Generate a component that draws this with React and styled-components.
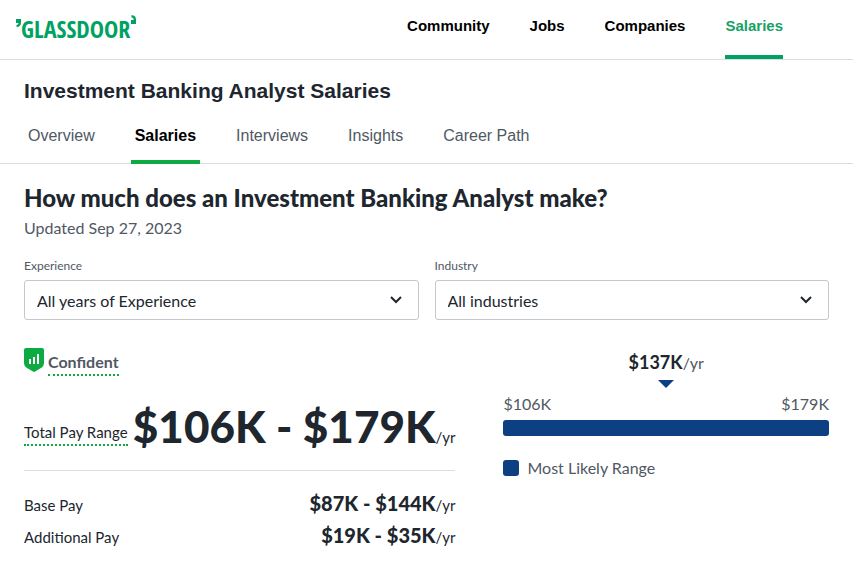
import React, { useState } from 'react';
import styled, { createGlobalStyle } from 'styled-components';

const GlobalStyle = createGlobalStyle`
  * {
    box-sizing: border-box;
  }
  body {
    margin: 0;
    background: #fff;
    color: #20262e;
    font-family: Lato, 'Liberation Sans', sans-serif;
    font-size: 16px;
  }
  h1, h2, p, ul, dl, dd {
    margin: 0;
    padding: 0;
  }
  ul {
    list-style: none;
  }
  a {
    color: inherit;
    text-decoration: none;
  }
`;

const Header = styled.header`
  display: flex;
  justify-content: space-between;
  height: 60px;
  padding: 0 70px 0 16px;
  border-bottom: 1px solid #dcdddf;
  font-family: 'Liberation Sans', Arial, sans-serif;
`;

const Logo = styled.a`
  display: flex;
  align-items: flex-start;
  padding-top: 14px;
  color: #00a264;
  span {
    padding-top: 4px;
    font-family: 'Noto Sans ExtraCondensed', 'Open Sans Condensed', 'Roboto Condensed', 'Liberation Sans Narrow', sans-serif;
    font-size: 24px;
    font-weight: 700;
    line-height: 22px;
  }
`;

const MainNav = styled.nav`
  ul {
    display: flex;
    gap: 40px;
    height: 100%;
  }
  li {
    display: flex;
  }
`;

const NavLink = styled.a`
  padding-top: 16px;
  border-bottom: 4px solid ${({ $active }) => ($active ? '#00a264' : 'transparent')};
  color: ${({ $active }) => ($active ? '#17a167' : '#000')};
  font-size: 15px;
  font-weight: 700;
  line-height: 20px;
`;

const SubHeader = styled.section`
  padding: 18px 24px 0;
  border-bottom: 1px solid #dcdddf;
  font-family: 'Liberation Sans', Arial, sans-serif;
  h1 {
    font-size: 21px;
    line-height: 26px;
  }
`;

const Tabs = styled.ul`
  display: flex;
  gap: 32px;
  margin: 20px 0 -1px;
`;

const Tab = styled.a`
  display: block;
  padding: 0 4px 12px;
  border-bottom: 4px solid ${({ $active }) => ($active ? '#0caa41' : 'transparent')};
  color: ${({ $active }) => ($active ? '#000' : '#505863')};
  font-weight: ${({ $active }) => ($active ? 700 : 400)};
  line-height: 24px;
`;

const Main = styled.main`
  padding: 18px 24px;
  h2 {
    font-size: 24px;
    font-weight: 900;
    line-height: 32px;
  }
`;

const Updated = styled.p`
  padding-top: 2px;
  color: #505863;
  line-height: 24px;
`;

const Filters = styled.form`
  display: grid;
  grid-template-columns: 1fr 1fr;
  gap: 16px;
  padding-top: 18px;
`;

const Field = styled.div`
  label {
    display: block;
    padding-bottom: 6px;
    color: #505863;
    font-size: 12px;
    line-height: 16px;
  }
`;

const SelectBox = styled.div`
  display: grid;
  align-items: center;
  > * {
    grid-area: 1 / 1;
  }
  svg {
    justify-self: end;
    margin-right: 17px;
    pointer-events: none;
  }
`;

const Select = styled.select`
  appearance: none;
  width: 100%;
  height: 40px;
  padding: 0 40px 0 12px;
  border: 1px solid #c4c7cc;
  border-radius: 3px;
  background: #fff;
  color: #20262e;
  font-family: inherit;
  font-size: 16px;
`;

const Summary = styled.div`
  display: grid;
  grid-template-columns: 57fr 43fr;
  gap: 48px;
  padding-top: 28px;
`;

const Confidence = styled.div`
  display: flex;
  gap: 4px;
`;

const Hint = styled.button`
  padding: 0;
  border: 0;
  border-bottom: 2px dotted #0caa41;
  background: none;
  color: ${({ $strong }) => ($strong ? '#505863' : '#20262e')};
  font-family: inherit;
  font-size: ${({ $strong }) => ($strong ? '16px' : '15px')};
  font-weight: ${({ $strong }) => ($strong ? 700 : 400)};
  line-height: 24px;
`;

const ConfidentHint = styled(Hint)`
  margin-top: 2px;
`;

const TotalRow = styled.div`
  display: flex;
  align-items: flex-end;
  justify-content: space-between;
  padding: 30px 0 24px;
  border-bottom: 1px solid #dcdddf;
  white-space: nowrap;
`;

const TotalPay = styled.div`
  font-size: 15px;
  line-height: 1;
  strong {
    font-size: 44px;
    font-weight: 900;
    line-height: 40px;
  }
`;

const Breakdown = styled.dl`
  padding-top: 18px;
  font-size: 15px;
  div {
    display: flex;
    align-items: baseline;
    justify-content: space-between;
    line-height: 32px;
  }
  strong {
    font-size: 20px;
    font-weight: 900;
    line-height: 1;
  }
`;

const Range = styled.div`
  color: #505863;
`;

const Median = styled.div`
  display: flex;
  flex-direction: column;
  align-items: center;
  gap: 4px;
  padding-top: 2px;
  line-height: 26px;
  strong {
    color: #20262e;
    font-size: 18px;
    font-weight: 700;
    line-height: 1;
  }
`;

const Ends = styled.div`
  display: flex;
  justify-content: space-between;
  padding: 5px 0;
  line-height: 22px;
`;

const Bar = styled.div`
  height: 16px;
  border-radius: 3px;
  background: #0d3f83;
`;

const Legend = styled.div`
  display: flex;
  align-items: center;
  gap: 8px;
  padding-top: 20px;
  line-height: 24px;
`;

const Swatch = styled.span`
  width: 16px;
  height: 16px;
  border-radius: 3px;
  background: #0d3f83;
`;

const mainLinks = ['Community', 'Jobs', 'Companies', 'Salaries'];
const tabs = ['Overview', 'Salaries', 'Interviews', 'Insights', 'Career Path'];
const breakdown = [
  { label: 'Base Pay', range: '$87K - $144K' },
  { label: 'Additional Pay', range: '$19K - $35K' },
];

const GlassdoorLogo = () => (
  <Logo href='#' aria-label='Glassdoor'>
    <svg width='5' height='14' viewBox='0 0 5 14' fill='currentColor'>
      <path d='M0 5h5v4c0 2.400-1.500 3.800-4.500 4V11c1.300-.1 2-.7 2-1.900H0z' />
    </svg>
    <span>GLASSDOOR</span>
    <svg width='6' height='12' viewBox='0 0 6 12' fill='currentColor'>
      <path d='M6 10H1V6h2.700C3.700 4.300 3 3.500 1.500 3.500V1C4.500 1.200 6 2.800 6 5.500z' />
    </svg>
  </Logo>
);

const Chevron = () => (
  <svg width='12' height='8' viewBox='0 0 12 8' fill='none' stroke='#20262e' strokeWidth='2'>
    <path d='M1 1l5 5 5-5' />
  </svg>
);

const Shield = () => (
  <svg width='20' height='24' viewBox='0 0 20 24'>
    <path
      d='M2 0h16a2 2 0 0 1 2 2v12.500c0 2.500-1 4.300-3 5.500l-6 3.600a2 2 0 0 1-2 0L3 20c-2-1.200-3-3-3-5.500V2a2 2 0 0 1 2-2z'
      fill='#0caa41'
    />
    <path d='M5 11h2v5H5zM9 9h2v7H9zM13 6h2v10h-2z' fill='#fff' />
  </svg>
);

const FilterSelect = ({ id, label, options }) => {
  const [value, setValue] = useState(options[0]);
  return (
    <Field>
      <label htmlFor={id}>{label}</label>
      <SelectBox>
        <Select id={id} value={value} onChange={(e) => setValue(e.target.value)}>
          {options.map((option) => (
            <option key={option}>{option}</option>
          ))}
        </Select>
        <Chevron />
      </SelectBox>
    </Field>
  );
};

export default function App() {
  return (
    <>
      <GlobalStyle />
      <Header>
        <GlassdoorLogo />
        <MainNav>
          <ul>
            {mainLinks.map((name) => (
              <li key={name}>
                <NavLink href='#' $active={name === 'Salaries'}>
                  {name}
                </NavLink>
              </li>
            ))}
          </ul>
        </MainNav>
      </Header>
      <SubHeader>
        <h1>Investment Banking Analyst Salaries</h1>
        <Tabs>
          {tabs.map((name) => (
            <li key={name}>
              <Tab href='#' $active={name === 'Salaries'}>
                {name}
              </Tab>
            </li>
          ))}
        </Tabs>
      </SubHeader>
      <Main>
        <h2>How much does an Investment Banking Analyst make?</h2>
        <Updated>Updated Sep 27, 2023</Updated>
        <Filters>
          <FilterSelect id='experience' label='Experience' options={['All years of Experience']} />
          <FilterSelect id='industry' label='Industry' options={['All industries']} />
        </Filters>
        <Summary>
          <div>
            <Confidence>
              <Shield />
              <ConfidentHint type='button' $strong>
                Confident
              </ConfidentHint>
            </Confidence>
            <TotalRow>
              <Hint type='button'>Total Pay Range</Hint>
              <TotalPay>
                <strong>$106K - $179K</strong>/yr
              </TotalPay>
            </TotalRow>
            <Breakdown>
              {breakdown.map(({ label, range }) => (
                <div key={label}>
                  <dt>{label}</dt>
                  <dd>
                    <strong>{range}</strong>/yr
                  </dd>
                </div>
              ))}
            </Breakdown>
          </div>
          <Range>
            <Median>
              <div>
                <strong>$137K</strong>/yr
              </div>
              <svg width='16' height='8' viewBox='0 0 16 8'>
                <path d='M0 0h16L8 8z' fill='#0d3f83' />
              </svg>
            </Median>
            <Ends>
              <span>$106K</span>
              <span>$179K</span>
            </Ends>
            <Bar />
            <Legend>
              <Swatch />
              Most Likely Range
            </Legend>
          </Range>
        </Summary>
      </Main>
    </>
  );
}
